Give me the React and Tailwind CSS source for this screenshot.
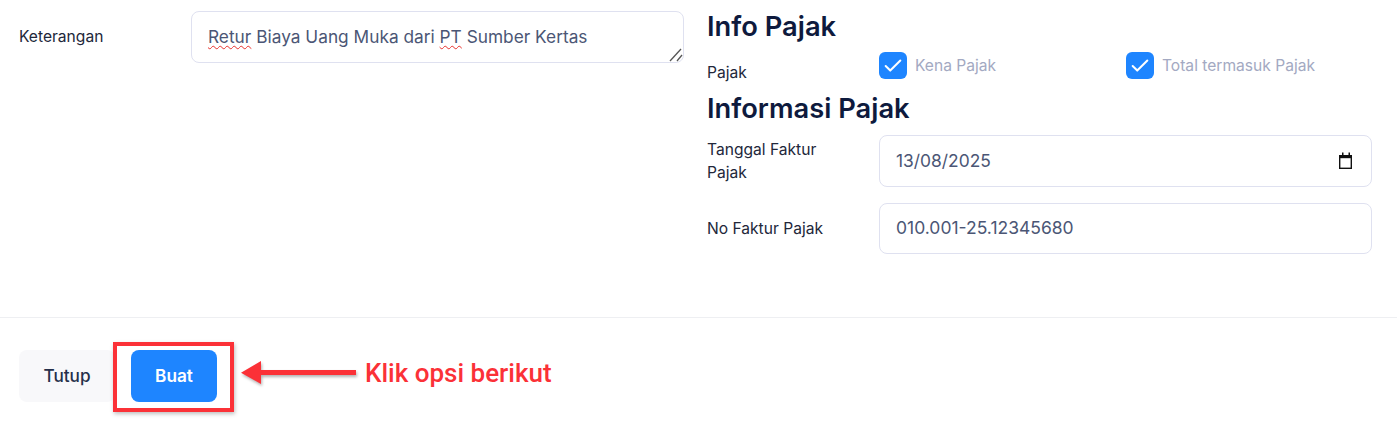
import React from "react";
import { Check } from "lucide-react";

function Checkbox({ label, className }) {
  return (
    <div className={"flex items-center gap-[8px] " + className}>
      <div className="flex h-[27px] w-[28px] items-center justify-center rounded-[6px] bg-[#1e85ff]">
        <Check size={22} strokeWidth={2.2} className="text-white" />
      </div>
      <span className="text-[15.6px] text-[#a3a9c2]">{label}</span>
    </div>
  );
}

function App() {
  return (
    <div className="relative h-[426px] w-[1397px] overflow-hidden bg-white font-['Inter',sans-serif] text-[15.6px] text-[#22273a]">
      <div className="flex h-[318px] border-b border-[#eeeff2]">
        {/* kiri */}
        <div className="flex w-[684px] shrink-0 pl-[19px] pt-[11px]">
          <label className="w-[172px] shrink-0 pt-[16px] leading-[20px]">Keterangan</label>
          <div className="relative h-[52px] w-[493px] rounded-[8px] border border-[#dfe1f0] px-[16px] pt-[13px] text-[17.3px] leading-[24px] text-[#4b5675]">
            <span className="underline decoration-[#e8322e] decoration-wavy decoration-1 underline-offset-2">Retur</span>{" "}
            Biaya Uang Muka dari{" "}
            <span className="underline decoration-[#e8322e] decoration-wavy decoration-1 underline-offset-2">PT</span>{" "}
            Sumber Kertas
            <svg className="absolute bottom-0 right-0" width="14" height="14" viewBox="0 0 14 14" fill="none" stroke="#555" strokeWidth="1.3">
              <path d="M1 13 12 1" />
              <path d="M8 13 13 7" />
            </svg>
          </div>
        </div>

        {/* kanan */}
        <div className="ml-[23px] w-[665px] pt-[10px]">
          <h2 className="text-[27.3px] font-semibold leading-[34px] text-[#0e1a3d]">Info Pajak</h2>
          <div className="mt-[8px] flex h-[27px]">
            <label className="w-[172px] shrink-0 pt-[11px] leading-[20px]">Pajak</label>
            <Checkbox label="Kena Pajak" className="w-[247px]" />
            <Checkbox label="Total termasuk Pajak" className="" />
          </div>
          <h2 className="mt-[13px] text-[27.3px] font-semibold leading-[34px] text-[#0e1a3d]">Informasi Pajak</h2>
          <div className="mt-[9px] flex">
            <label className="w-[172px] shrink-0 pr-[30px] pt-[3px] leading-[23px]">Tanggal Faktur Pajak</label>
            <div className="flex h-[52px] w-[493px] items-center justify-between rounded-[8px] border border-[#dfe1f0] pl-[16px] pr-[19px] text-[17.4px] text-[#4b5675]">
              <span>13/08/2025</span>
              <svg width="16" height="18" viewBox="0 0 16 18" fill="none">
                <rect x="3" y="3" width="13" height="14" fill="#111" />
                <rect x="4.4" y="6.2" width="10.2" height="9.4" fill="#fff" />
                <rect x="6" y="0.5" width="1.5" height="3" fill="#111" />
                <rect x="12.5" y="0.5" width="1.5" height="3" fill="#111" />
              </svg>
            </div>
          </div>
          <div className="mt-[16px] flex">
            <label className="flex w-[172px] shrink-0 items-center leading-[23px]">No Faktur Pajak</label>
            <div className="flex h-[51px] w-[493px] items-center rounded-[8px] border border-[#dfe1f0] px-[16px] text-[17.5px] text-[#4b5675]">
              010.001-25.12345680
            </div>
          </div>
        </div>
      </div>

      <div className="flex gap-[16px] pl-[19px] pt-[32px]">
        <button className="h-[52px] w-[96px] rounded-[8px] bg-[#f8f8fa] text-[17.2px] font-medium text-[#252f4a]">Tutup</button>
        <button className="h-[52px] w-[86px] rounded-[8px] bg-[#1e85ff] text-[17.2px] font-semibold text-white">Buat</button>
      </div>

      {/* anotasi */}
      <div className="absolute left-[113px] top-[342px] h-[70px] w-[121px] border-[4px] border-[#fb3137] shadow-[1px_2px_4px_rgba(0,0,0,0.25)]" />
      <svg className="absolute left-[240px] top-[358px]" width="122" height="32" viewBox="0 0 122 32">
        <path d="M1 14.7 L21 3 L21 12 L116 12 L116 17 L21 17 L21 26 Z" fill="#fb3137" style={{ filter: "drop-shadow(1px 2px 1.5px rgba(0,0,0,0.3))" }} />
      </svg>
      <span className="absolute left-[365px] top-[358px] font-['Roboto',sans-serif] text-[26px] font-medium leading-[30px] text-[#fb3137]">Klik opsi berikut</span>
    </div>
  );
}

export default App;
